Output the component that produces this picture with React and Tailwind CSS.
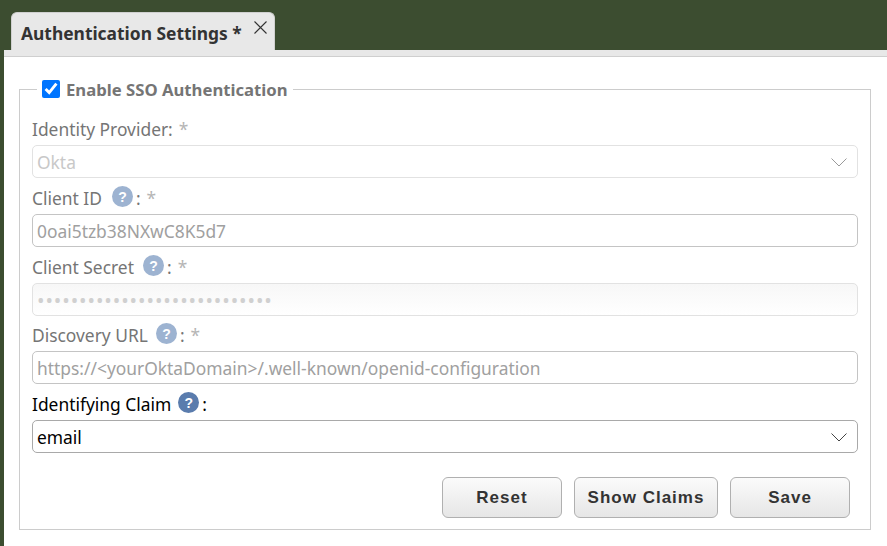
import React from "react";

function Help({ dark }) {
  return (
    <span className={`inline-flex items-center justify-center w-[21px] h-[21px] rounded-full text-white text-[14px] font-bold font-['Liberation_Sans',sans-serif] ${dark ? "bg-[#5a7cad]" : "bg-[#9db3d1]"}`}>?</span>
  );
}
function Chevron({ color }) {
  return (
    <svg width="16" height="9" viewBox="0 0 16 9" fill="none" className="absolute right-[10px] top-[12px]">
      <path d="M0.5 0.5L8 8L15.5 0.5" stroke={color} strokeWidth="1" />
    </svg>
  );
}
function Label({ text, help, star = true, dark, h = "h-[36px]", gap = "ml-[9px]" }) {
  return (
    <div className={`${h} flex items-end pb-[5px] leading-[22px] ${dark ? "text-black" : "text-[#757575]"}`}>
      <span>{text}</span>
      {help && <span className={`${gap} mr-[3px] mb-[2px] flex items-center`}><Help dark={dark} /></span>}
      {help && <span>:</span>}
      {star && <span className="ml-[6px] text-[#b5b5b5]">*</span>}
    </div>
  );
}
function Box({ children, border, bg }) {
  return (
    <div className={`relative h-[33px] rounded-[5px] border px-[4px] pt-[2px] flex items-center leading-none ${border} ${bg || "bg-white"}`}>
      {children}
    </div>
  );
}
function Btn({ w, children }) {
  return (
    <button className={`${w} h-[41px] rounded-[6px] border border-[#b0b0b0] bg-gradient-to-b from-[#fbfbfb] to-[#e6e6e6] text-[#333] font-bold text-[17px] tracking-[1px] font-['Liberation_Sans',sans-serif]`}>
      {children}
    </button>
  );
}

export default function App() {
  return (
    <div className="w-[887px] h-[546px] overflow-hidden bg-[#3c4d30] font-['Noto_Sans',sans-serif] text-[17.4px] flex flex-col">
      <div className="h-[50px] shrink-0 pl-[11px] pt-[12px]">
        <div className="relative w-[264px] h-[38px] rounded-t-[6px] bg-[#e8e8e8] border-t border-x border-[#d0d0d0] pl-[9px] pt-[9px] text-[#333] font-bold text-[17.4px] leading-[22px] whitespace-nowrap">
          Authentication Settings *
          <svg width="13" height="13" viewBox="0 0 13 13" className="absolute right-[7px] top-[8px]" fill="none">
            <path d="M0.5 0.5L12.5 12.5M12.5 0.5L0.5 12.5" stroke="#333" strokeWidth="1.1" />
          </svg>
        </div>
      </div>
      <div className="flex-1 ml-[4px] bg-white">
        <div className="h-[7px] bg-[#e8e8e8] border-b border-[#cfcfcf]" />
        <fieldset className="mt-[22px] ml-[15px] w-[852px] h-[451px] border border-[#cccccc] px-[12px]">
          <legend className="ml-[5px] px-[5px] h-[20px] flex items-center gap-[6px] text-[#757575] font-bold text-[16.7px]">
            <input type="checkbox" defaultChecked className="w-[18px] h-[18px] accent-[#0075ff] m-0" />
            <span className="pt-[1px]">Enable SSO Authentication</span>
          </legend>
          <div className="mt-[10px]">
            <Label text="Identity Provider:" />
            <Box border="border-[#e2e2e2]"><span className="text-[#c8c8c8]">Okta</span><Chevron color="#999" /></Box>
            <Label text="Client ID" help gap="ml-[10px]" />
            <Box border="border-[#c4c4c4] text-[#a0a0a0]">0oai5tzb38NXwC8K5d7</Box>
            <Label text="Client Secret" help />
            <Box border="border-[#e2e2e2]" bg="bg-gradient-to-b from-[#f7f7f7] to-white"><span className="text-[#d0d0d0] text-[20px] tracking-[0.9px]">{"•".repeat(28)}</span></Box>
            <Label text="Discovery URL" help gap="ml-[8px]" h="h-[35px]" />
            <Box border="border-[#c4c4c4] text-[#a0a0a0]">{"https://<yourOktaDomain>/.well-known/openid-configuration"}</Box>
            <Label text="Identifying Claim" help dark star={false} gap="ml-[7px]" />
            <Box border="border-[#a9a9a9] text-black">email<Chevron color="#444" /></Box>
            <div className="mt-[24px] pr-[8px] flex justify-end gap-[12px]">
              <Btn w="w-[120px]">Reset</Btn>
              <Btn w="w-[144px]">Show Claims</Btn>
              <Btn w="w-[120px]">Save</Btn>
            </div>
          </div>
        </fieldset>
      </div>
    </div>
  );
}
